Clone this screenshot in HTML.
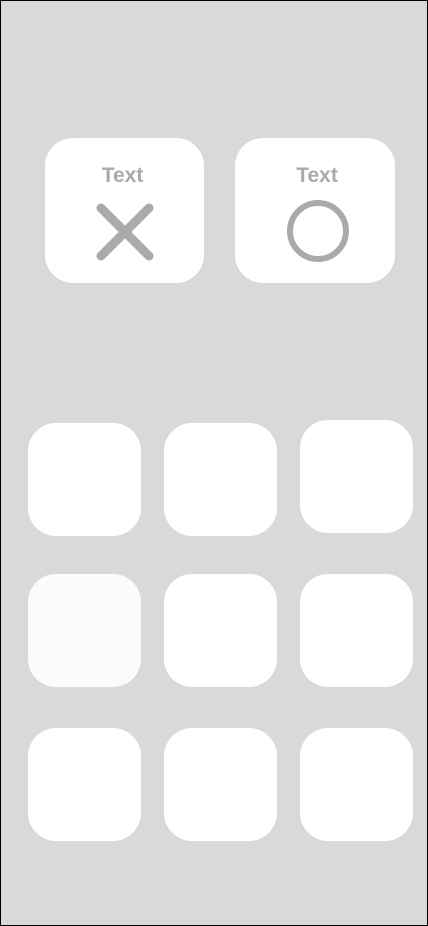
<!DOCTYPE html>
<html><head><style>
body{margin:0;width:428px;height:926px;overflow:hidden}
.f{position:absolute;left:0;top:0;width:426px;height:924px;border:1px solid #000;background:#d9d9d9}
.c{position:absolute;background:#fff;border-radius:28px}
.t{position:absolute;width:100%;top:26px;text-align:center;font:bold 21px "Liberation Sans",sans-serif;color:#aaa}
</style></head><body><div class="f"></div>
<div class="c" style="left:45px;top:138px;width:159px;height:145px"><div class="t" style="left:-2px">Text</div>
<svg style="position:absolute;left:0;top:0" width="159" height="145"><path d="M56 70L104 118M104 70L56 118" stroke="#aaa" stroke-width="9" stroke-linecap="round"/></svg></div>
<div class="c" style="left:235px;top:138px;width:160px;height:145px"><div class="t" style="left:2px">Text</div>
<svg style="position:absolute;left:0;top:0" width="160" height="145"><circle cx="83" cy="93" r="28" fill="none" stroke="#aaa" stroke-width="6"/></svg></div>
<div class="c" style="left:28px;top:423px;width:113px;height:113px"></div>
<div class="c" style="left:164px;top:423px;width:113px;height:113px"></div>
<div class="c" style="left:300px;top:420px;width:113px;height:113px"></div>
<div class="c" style="left:28px;top:574px;width:113px;height:113px;background:#fcfbfa"></div>
<div class="c" style="left:164px;top:574px;width:113px;height:113px"></div>
<div class="c" style="left:300px;top:574px;width:113px;height:113px"></div>
<div class="c" style="left:28px;top:728px;width:113px;height:113px"></div>
<div class="c" style="left:164px;top:728px;width:113px;height:113px"></div>
<div class="c" style="left:300px;top:728px;width:113px;height:113px"></div>
</body></html>
